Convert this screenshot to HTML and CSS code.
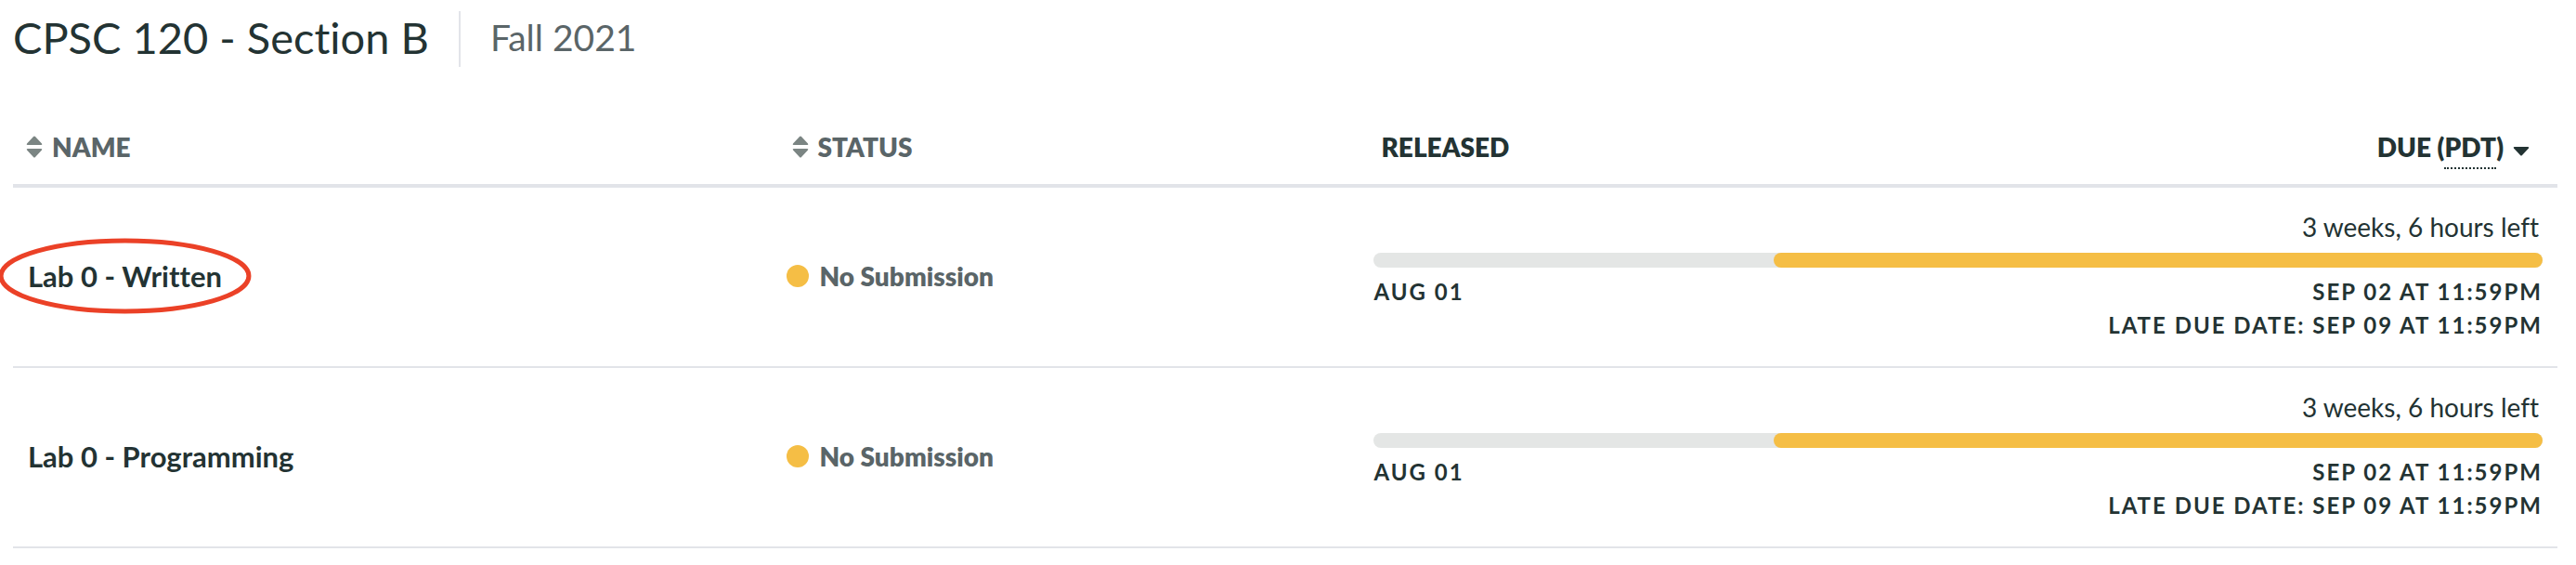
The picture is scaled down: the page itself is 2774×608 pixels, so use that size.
FILE: index.html
```html
<!DOCTYPE html>
<html lang="en">
<head>
<meta charset="utf-8">
<title>CPSC 120 - Section B</title>
<link rel="stylesheet" href="styles.css">
</head>
<body>
<main class="page">
  <header class="course">
    <h1 class="course-title">CPSC 120 - Section B</h1>
    <p class="course-term">Fall 2021</p>
  </header>
  <table class="assignments">
    <colgroup><col class="col-name"><col class="col-status"><col></colgroup>
    <thead>
      <tr>
        <th scope="col" class="head-name"><button class="sort" type="button"><svg class="sort-icon" viewBox="0 0 18 24" aria-hidden="true"><path d="M1 8.500 8 1q1-1 2 0l7 7.500q1 1.500-.8 1.500H1.800Q0 10 1 8.500ZM1 15.500 8 23q1 1 2 0l7-7.500q1-1.500-.8-1.500H1.800Q0 14 1 15.500Z"/></svg>Name</button></th>
        <th scope="col" class="head-status"><button class="sort" type="button"><svg class="sort-icon" viewBox="0 0 18 24" aria-hidden="true"><path d="M1 8.500 8 1q1-1 2 0l7 7.500q1 1.500-.8 1.500H1.800Q0 10 1 8.500ZM1 15.500 8 23q1 1 2 0l7-7.500q1-1.500-.8-1.500H1.800Q0 14 1 15.500Z"/></svg>Status</button></th>
        <th scope="col" class="head-dates">
          <div class="date-heads">
            <button class="sort sort-active" type="button">Released</button>
            <button class="sort sort-active" type="button"><span>Due (<abbr class="zone">PDT</abbr>)</span><svg class="caret" viewBox="0 0 18 24" aria-hidden="true"><path d="M1 13.500 8 21q1 1 2 0l7-7.500q1-1.500-.8-1.500H1.800Q0 12 1 13.500Z"/></svg></button>
          </div>
        </th>
      </tr>
    </thead>
    <tbody>
      <tr>
        <td><a class="lab" href="#written">Lab 0 - Written<svg class="ring" viewBox="0 0 270 82" preserveAspectRatio="none" aria-hidden="true"><ellipse cx="135" cy="41" rx="132" ry="38"/></svg></a></td>
        <td><div class="status"><span class="dot"></span>No Submission</div></td>
        <td>
          <p class="left">3 weeks, 6 hours left</p>
          <div class="bar"><div class="bar-fill" style="width:65.800%"></div></div>
          <div class="dates"><time>Aug 01</time><div class="due"><time>Sep 02 at 11:59PM</time><span>Late Due Date: <time>Sep 09 at 11:59PM</time></span></div></div>
        </td>
      </tr>
      <tr>
        <td><a class="lab" href="#programming">Lab 0 - Programming</a></td>
        <td><div class="status"><span class="dot"></span>No Submission</div></td>
        <td>
          <p class="left">3 weeks, 6 hours left</p>
          <div class="bar"><div class="bar-fill" style="width:65.800%"></div></div>
          <div class="dates"><time>Aug 01</time><div class="due"><time>Sep 02 at 11:59PM</time><span>Late Due Date: <time>Sep 09 at 11:59PM</time></span></div></div>
        </td>
      </tr>
    </tbody>
  </table>
</main>
</body>
</html>
```

FILE: styles.css
```css
* { box-sizing: border-box; }
body {
  margin: 0;
  background: #fff;
  color: #233333;
  font-family: Lato, "Open Sans", sans-serif;
  font-size: 28px;
  font-variant-ligatures: none;
  line-height: 36px;
}
h1, p { margin: 0; font-weight: 400; }
.page { padding: 12px 20px 16px 14px; }

.course { display: flex; align-items: stretch; margin-bottom: 58px; line-height: 56px; }
.course-title { padding: 0 32px 4px 0; font-size: 47px; }
.course-term { padding: 0 0 4px 32px; border-left: 2px solid #e2e4e9; color: #5a6568; font-size: 39px; }

.assignments { width: 100%; table-layout: fixed; border-collapse: separate; border-spacing: 0; }
.col-name { width: 29.8%; }
.col-status { width: 23.1%; }
th { padding: 10px 16px 22px 14px; border-bottom: 4px solid #e2e4e9; text-align: left; }
.head-status { padding-left: 22px; }
.head-dates { padding: 10px 30px 22px 24px; }
.date-heads { display: flex; justify-content: space-between; }
.sort {
  display: flex;
  align-items: center;
  gap: 10px;
  padding: 0;
  border: 0;
  background: none;
  color: #5a6568;
  font: inherit;
  font-weight: 800;
  text-transform: uppercase;
  cursor: pointer;
}
.sort-active { color: #233333; }
.sort-icon, .caret { width: 18px; height: 24px; fill: #7b8583; }
.caret { fill: #233333; }
.zone { padding-bottom: 5px; border-bottom: 2px dotted #233333; text-decoration: none; }

td { padding: 24px 16px 26px; border-bottom: 2px solid #e2e4e9; vertical-align: middle; }
.lab { position: relative; color: #233333; font-size: 31px; font-weight: 700; text-decoration: none; }
.ring { position: absolute; inset: -22px -32px; width: calc(100% + 64px); height: calc(100% + 44px); overflow: visible; fill: none; stroke: #eb4127; stroke-width: 5px; pointer-events: none; }
.status { display: flex; align-items: center; gap: 12px; color: #5a6568; font-weight: 800; }
.dot { width: 24px; height: 24px; border-radius: 50%; background: #f5be45; }
.left { padding-right: 4px; text-align: right; }
.bar { display: flex; justify-content: flex-end; height: 16px; margin: 10px 0 8px; border-radius: 8px; background: #e4e6e5; }
.bar-fill { border-radius: 8px; background: #f5be45; }
.dates { display: flex; justify-content: space-between; font-size: 24px; font-weight: 700; letter-spacing: 2px; text-transform: uppercase; }
.due { display: flex; flex-direction: column; align-items: flex-end; }
```
